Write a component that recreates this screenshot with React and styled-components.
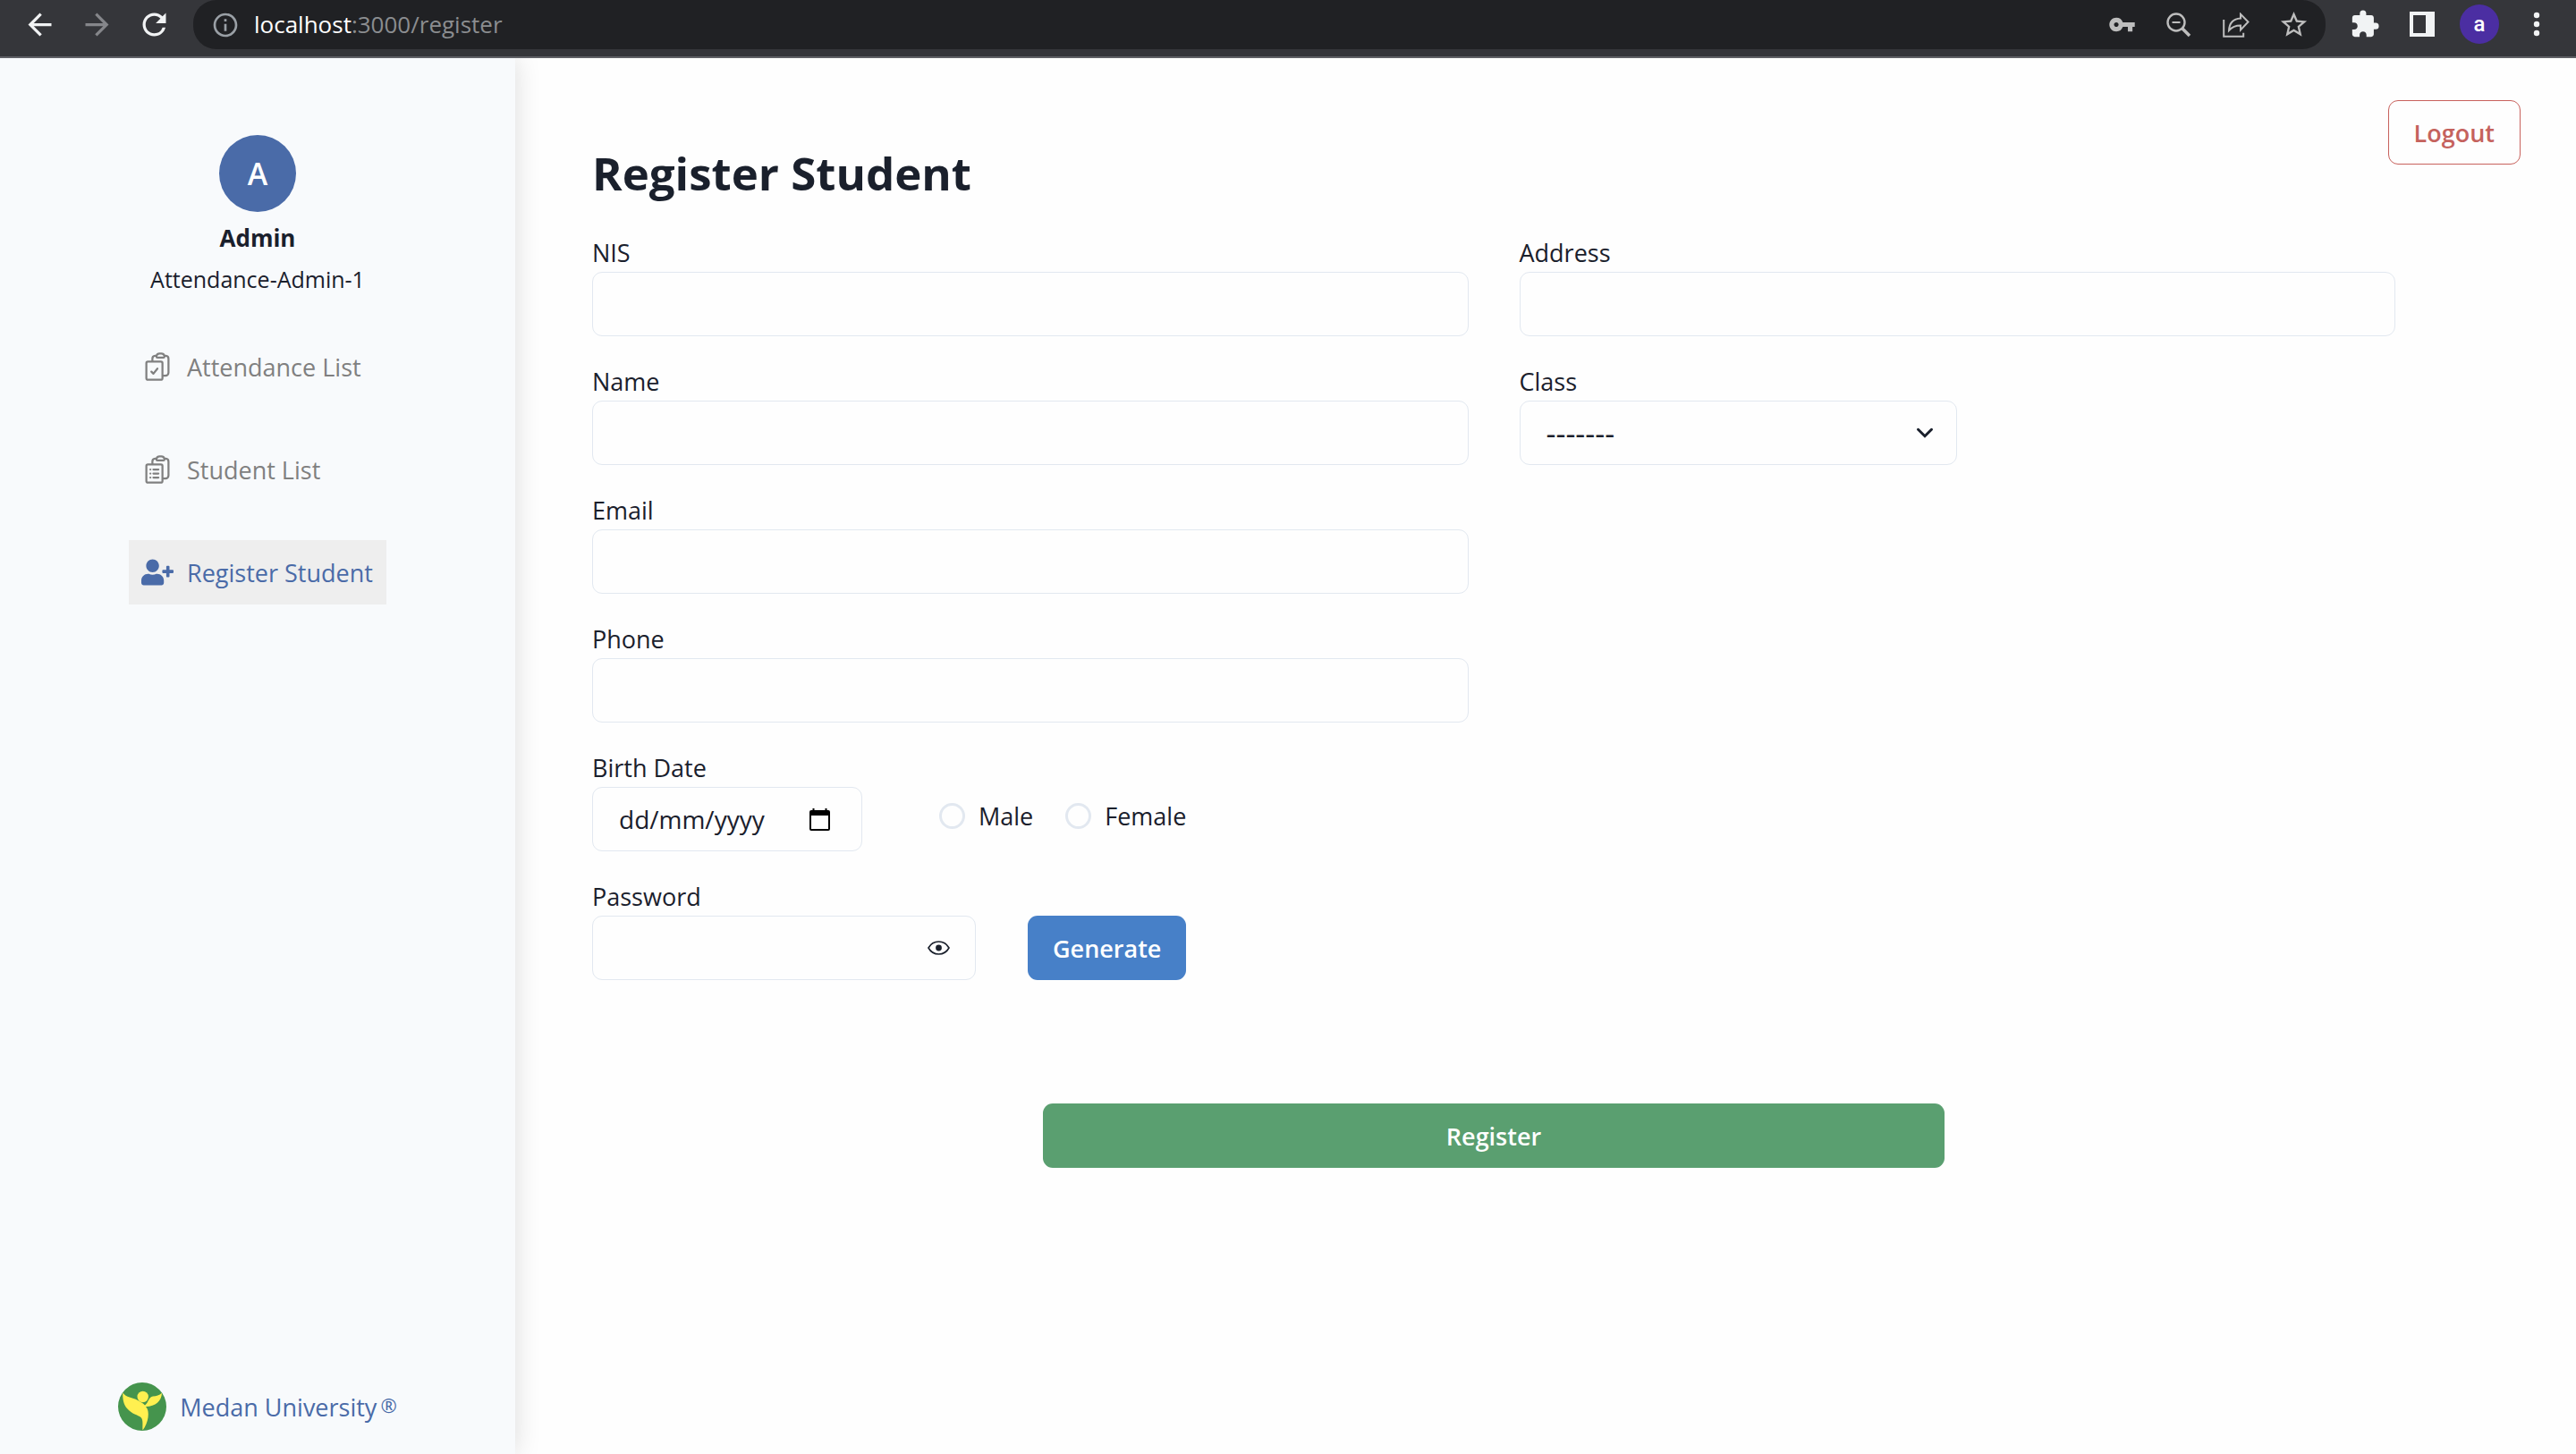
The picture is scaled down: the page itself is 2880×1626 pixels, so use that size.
import React, { useState } from "react";
import styled, { createGlobalStyle } from "styled-components";
import {
  HiOutlineClipboardDocumentCheck,
  HiOutlineClipboardDocumentList,
} from "react-icons/hi2";
import { FaUserPlus } from "react-icons/fa";
import {
  MdArrowBack,
  MdArrowForward,
  MdRefresh,
  MdInfoOutline,
  MdVpnKey,
  MdStarBorder,
  MdExtension,
} from "react-icons/md";

const GlobalStyle = createGlobalStyle`
  *, *::before, *::after { box-sizing: border-box; }
  body {
    margin: 0;
    background: #fefefe;
    color: #1a202c;
    font-family: "Segoe UI", "Open Sans", "Noto Sans", sans-serif;
    font-size: 27px;
    line-height: 43px;
  }
  button, input, select { font: inherit; color: inherit; }
  button { cursor: pointer; }
`;

const Screen = styled.div`
  display: flex;
  flex-direction: column;
  min-height: 100vh;
`;

const BrowserBar = styled.header`
  display: flex;
  align-items: flex-start;
  height: 65px;
  padding: 0 24px 0 26px;
  background: #35363a;
  border-bottom: 2px solid #5f6065;
`;

const BarButton = styled.button`
  display: flex;
  align-items: center;
  justify-content: center;
  width: ${(p) => p.$width || 64}px;
  height: 54px;
  padding: 0;
  border: 0;
  background: none;
  color: ${(p) => p.$color || "#f1f3f4"};
  svg { display: block; }
`;

const HistoryButtons = styled.div`
  display: flex;
  margin-left: -14px;
  margin-right: 12px;
`;

const AddressBar = styled.div`
  flex: 1;
  display: flex;
  align-items: center;
  height: 55px;
  padding: 0 4px 0 20px;
  border-radius: 26px;
  background: #202124;
  color: #9aa0a6;
`;

const Url = styled.span`
  flex: 1;
  margin-left: 16px;
  font-size: 26px;
  color: #8b8d90;
  b { font-weight: 400; color: #ffffff; }
`;

const ProfileBadge = styled.span`
  display: grid;
  place-items: center;
  width: 44px;
  height: 44px;
  border-radius: 50%;
  background: #4b2ea2;
  color: #ffffff;
  font: 500 24px/44px Roboto, sans-serif;
`;

const Layout = styled.div`
  flex: 1;
  display: flex;
`;

const Sidebar = styled.aside`
  display: flex;
  flex-direction: column;
  align-items: center;
  width: 20%;
  padding: 86px 0 26px;
  background: #f8fafc;
  box-shadow: 0 0 28px rgba(0, 0, 0, 0.14);
  clip-path: inset(0 -40px 0 0);
`;

const Avatar = styled.div`
  display: grid;
  place-items: center;
  width: 86px;
  height: 86px;
  border-radius: 50%;
  background: #4a6ba8;
  color: #ffffff;
  font-size: 34px;
  font-weight: 600;
`;

const UserName = styled.div`
  margin-top: 8px;
  font-size: 26px;
  font-weight: 700;
`;

const UserRole = styled.div`
  margin-top: 3px;
  font-size: 25px;
`;

const Nav = styled.nav`
  display: flex;
  flex-direction: column;
  gap: 43px;
  width: 50%;
  margin-top: 40px;
`;

const NavLink = styled.a`
  display: flex;
  align-items: center;
  gap: 15px;
  height: 72px;
  padding: 0 14px;
  white-space: nowrap;
  text-decoration: none;
  color: ${(p) => (p.$active ? "#4a6ba8" : "#808080")};
  background: ${(p) => (p.$active ? "#eeeeee" : "transparent")};
  svg { flex: none; }
`;

const Brand = styled.a`
  display: flex;
  align-items: center;
  gap: 15px;
  margin-top: auto;
  color: #4a6ba8;
  text-decoration: none;
  sup {
    margin-left: 4px;
    font-size: 22px;
    line-height: 0;
    vertical-align: 4px;
  }
`;

const Main = styled.main`
  flex: 1;
  display: flex;
  flex-direction: column;
  padding: 47px 62px 0 86px;
`;

const LogoutButton = styled.button`
  align-self: flex-end;
  height: 72px;
  padding: 0 28px;
  border: 1px solid #c8625d;
  border-radius: 11px;
  background: transparent;
  color: #c5625d;
  font-weight: 600;
`;

const Form = styled.form`
  display: flex;
  flex-direction: column;
  margin-right: 140px;
`;

const Title = styled.h1`
  margin: -26px 0 32px;
  font-size: 51px;
  line-height: 71px;
  font-weight: 700;
`;

const Columns = styled.div`
  display: grid;
  grid-template-columns: 1fr 1fr;
  gap: 57px;
  align-items: start;
`;

const Column = styled.div`
  display: flex;
  flex-direction: column;
  gap: 29px;
`;

const Row = styled.div`
  display: flex;
  align-items: flex-end;
  gap: ${(p) => p.$gap}px;
`;

const Field = styled.div`
  display: flex;
  flex-direction: column;
  width: ${(p) => p.$width || "100%"};
`;

const Control = styled.div`
  position: relative;
  display: flex;
`;

const Input = styled.input`
  width: 100%;
  height: 72px;
  padding: 0 29px;
  border: 1px solid #e2e8f0;
  border-radius: 11px;
  background: transparent;
  font-size: 28px;
  outline: none;
  &::placeholder { color: #1a202c; opacity: 1; }
`;

const Select = styled.select`
  width: 100%;
  height: 72px;
  padding: 0 57px 0 29px;
  border: 1px solid #e2e8f0;
  border-radius: 11px;
  background: transparent;
  font-size: 34px;
  appearance: none;
`;

const Adornment = styled.button`
  position: absolute;
  top: 0;
  right: ${(p) => p.$right}px;
  display: flex;
  align-items: center;
  height: 72px;
  padding: 0;
  border: 0;
  background: none;
`;

const SelectArrow = styled.svg`
  position: absolute;
  top: 18px;
  right: 18px;
  pointer-events: none;
`;

const Radios = styled.div`
  display: flex;
  align-items: center;
  gap: 36px;
  height: 80px;
`;

const RadioLabel = styled.label`
  display: flex;
  align-items: center;
  gap: 15px;
`;

const Radio = styled.input`
  appearance: none;
  width: 29px;
  height: 29px;
  margin: 0;
  border: 3px solid #e2e8f0;
  border-radius: 50%;
  &:checked { border: 9px solid #4780c8; }
`;

const SolidButton = styled.button`
  height: 72px;
  padding: 0 28px;
  border: 0;
  border-radius: 11px;
  background: ${(p) => p.$color};
  color: #ffffff;
  font-weight: 600;
`;

const SubmitButton = styled(SolidButton)`
  align-self: center;
  width: 50%;
  margin-top: 138px;
`;

const ZoomOutIcon = () => (
  <svg width="28" height="28" viewBox="0 0 28 28" fill="none" stroke="currentColor">
    <circle cx="11" cy="11" r="9.5" strokeWidth="2.4" />
    <path d="M6.5 11h9" strokeWidth="2" />
    <path d="M18 18l8 8" strokeWidth="3.6" />
  </svg>
);

const ShareIcon = () => (
  <svg width="30" height="28" viewBox="0 0 30 28" fill="none" stroke="currentColor" strokeWidth="2">
    <path d="M1.2 8v18.8h22v-4" />
    <path d="M7 20C7.500 12 12 7 20 6.500V1.800L28.500 10.500L20 19.500V14.500C14 14.500 10.500 16 7 20z" />
  </svg>
);

const SidePanelIcon = () => (
  <svg width="28" height="28" viewBox="0 0 28 28">
    <path fill="currentColor" fillRule="evenodd" d="M0 0h28v28H0zM4 4v20h14V4z" />
  </svg>
);

const MenuIcon = () => (
  <svg width="8" height="28" viewBox="0 0 8 28" fill="currentColor">
    <circle cx="4" cy="4" r="3.2" />
    <circle cx="4" cy="14" r="3.2" />
    <circle cx="4" cy="24" r="3.2" />
  </svg>
);

const CalendarIcon = () => (
  <svg width="23" height="25" viewBox="0 0 23 25">
    <path
      fill="#000"
      fillRule="evenodd"
      d="M3.500 0h2v2h12V0h2v2h1.500a2 2 0 0 1 2 2v19a2 2 0 0 1-2 2H2a2 2 0 0 1-2-2V4a2 2 0 0 1 2-2h1.500zM2 8v15h19V8z"
    />
  </svg>
);

const EyeIcon = () => (
  <svg width="25" height="16" viewBox="0 0 25 16">
    <path
      d="M1 8C3.500 3.500 8 1 12.500 1S21.500 3.500 24 8C21.500 12.500 17 15 12.500 15S3.500 12.500 1 8z"
      fill="none"
      stroke="#1a202c"
      strokeWidth="1.600"
    />
    <circle cx="12.500" cy="8" r="3.400" fill="#1a202c" />
  </svg>
);

const Logo = () => (
  <svg width="54" height="54" viewBox="0 0 54 54">
    <circle cx="27" cy="27" r="27" fill="#45944d" />
    <circle cx="27.700" cy="16" r="6.200" fill="#fff050" />
    <path
      fill="#fff050"
      d="M5.300 11.500C9 17 16 16.500 22 20C26 22 28 23.500 30 25.500C34 23 34 16 39 15.500C43 15 46 14.500 49 11.700C48.500 21 42 26.500 31 27C36 32 34 45 27.500 53.500C27 48 28.500 42 25.500 39C22 36 16 36 10 29C6 24.500 5 18 5.300 11.500z"
    />
  </svg>
);

const NAV_ITEMS = [
  { label: "Attendance List", icon: HiOutlineClipboardDocumentCheck },
  { label: "Student List", icon: HiOutlineClipboardDocumentList },
  { label: "Register Student", icon: FaUserPlus, active: true },
];

const TextField = ({ id, label }) => (
  <Field>
    <label htmlFor={id}>{label}</label>
    <Input id={id} name={id} type="text" />
  </Field>
);

export default function App() {
  const [visible, setVisible] = useState(false);

  return (
    <Screen>
      <GlobalStyle />
      <BrowserBar>
        <HistoryButtons>
          <BarButton aria-label="Back"><MdArrowBack size={39} /></BarButton>
          <BarButton aria-label="Forward" $color="#85868a"><MdArrowForward size={39} /></BarButton>
          <BarButton aria-label="Reload"><MdRefresh size={39} /></BarButton>
        </HistoryButtons>
        <AddressBar>
          <MdInfoOutline size={32} />
          <Url><b>localhost</b>:3000/register</Url>
          <BarButton aria-label="Passwords" $color="#bdbdbd"><MdVpnKey size={31} /></BarButton>
          <BarButton aria-label="Zoom out" $color="#bdbdbd"><ZoomOutIcon /></BarButton>
          <BarButton aria-label="Share" $color="#bdbdbd"><ShareIcon /></BarButton>
          <BarButton aria-label="Bookmark" $color="#bdbdbd"><MdStarBorder size={35} /></BarButton>
        </AddressBar>
        <BarButton aria-label="Extensions" $width={88}><MdExtension size={34} /></BarButton>
        <BarButton aria-label="Side panel" $width={40}><SidePanelIcon /></BarButton>
        <BarButton aria-label="Profile" $width={88}><ProfileBadge>a</ProfileBadge></BarButton>
        <BarButton aria-label="Menu" $width={40}><MenuIcon /></BarButton>
      </BrowserBar>

      <Layout>
        <Sidebar>
          <Avatar>A</Avatar>
          <UserName>Admin</UserName>
          <UserRole>Attendance-Admin-1</UserRole>
          <Nav>
            {NAV_ITEMS.map(({ label, icon: Icon, active }) => (
              <NavLink key={label} href="#" $active={active}>
                <Icon size={36} />
                {label}
              </NavLink>
            ))}
          </Nav>
          <Brand href="#">
            <Logo />
            <span>Medan University<sup>®</sup></span>
          </Brand>
        </Sidebar>

        <Main>
          <LogoutButton type="button">Logout</LogoutButton>
          <Form onSubmit={(e) => e.preventDefault()}>
            <Title>Register Student</Title>
            <Columns>
              <Column>
                <TextField id="nis" label="NIS" />
                <TextField id="name" label="Name" />
                <TextField id="email" label="Email" />
                <TextField id="phone" label="Phone" />
                <Row $gap={86}>
                  <Field $width="302px">
                    <label htmlFor="birth">Birth Date</label>
                    <Control>
                      <Input id="birth" name="birth" type="text" placeholder="dd/mm/yyyy" />
                      <Adornment type="button" aria-label="Open calendar" $right={36}>
                        <CalendarIcon />
                      </Adornment>
                    </Control>
                  </Field>
                  <Radios>
                    <RadioLabel><Radio type="radio" name="gender" value="male" />Male</RadioLabel>
                    <RadioLabel><Radio type="radio" name="gender" value="female" />Female</RadioLabel>
                  </Radios>
                </Row>
                <Row $gap={58}>
                  <Field $width="429px">
                    <label htmlFor="password">Password</label>
                    <Control>
                      <Input id="password" name="password" type={visible ? "text" : "password"} />
                      <Adornment
                        type="button"
                        aria-label="Show password"
                        $right={29}
                        onClick={() => setVisible(!visible)}
                      >
                        <EyeIcon />
                      </Adornment>
                    </Control>
                  </Field>
                  <SolidButton type="button" $color="#4780c8">Generate</SolidButton>
                </Row>
              </Column>
              <Column>
                <TextField id="address" label="Address" />
                <Field $width="50%">
                  <label htmlFor="class">Class</label>
                  <Control>
                    <Select id="class" name="class">
                      <option>-------</option>
                    </Select>
                    <SelectArrow width="36" height="36" viewBox="0 0 24 24">
                      <path
                        d="M7 9.500L12 14.500L17 9.500"
                        fill="none"
                        stroke="#1a202c"
                        strokeWidth="2"
                        strokeLinecap="round"
                      />
                    </SelectArrow>
                  </Control>
                </Field>
              </Column>
            </Columns>
            <SubmitButton type="submit" $color="#5a9f70">Register</SubmitButton>
          </Form>
        </Main>
      </Layout>
    </Screen>
  );
}
